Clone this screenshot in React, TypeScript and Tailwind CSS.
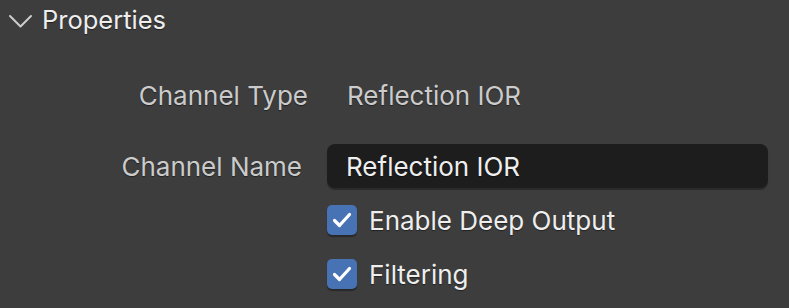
import React from 'react';

const Check: React.FC = () => (
  <div className="w-[30px] h-[30px] rounded-[5px] bg-[#4772b3] flex items-center justify-center shadow-[0_2px_1px_rgba(0,0,0,0.35)]">
    <svg width="22" height="22" viewBox="0 0 22 22" fill="none">
      <path d="M3.5 11.5 L8.5 16.5 L18.5 5.5" stroke="#ffffff" strokeWidth="3.2" strokeLinecap="round" strokeLinejoin="round" />
    </svg>
  </div>
);

export default function App() {
  return (
    <div className="w-[789px] h-[308px] bg-[#3d3d3d] font-['Inter','DejaVu_Sans',sans-serif] text-[26px] [text-shadow:0_1px_1px_rgba(0,0,0,0.45)] overflow-hidden">
      {/* panel header */}
      <div className="h-[40px] flex items-center pl-[8px]">
        <svg width="26" height="16" viewBox="0 0 26 16" fill="none" className="mt-[2px]">
          <path d="M2 3 L12.5 13.5 L23 3" stroke="#cccccc" strokeWidth="2" strokeLinecap="round" strokeLinejoin="round" />
        </svg>
        <span className="ml-[8px] text-[25.5px] text-[#eeeeee]">Properties</span>
      </div>

      {/* channel type */}
      <div className="mt-[34px] h-[42px] flex items-center">
        <div className="w-[308px] text-right text-[#cbcbcb]">Channel Type</div>
        <div className="ml-[39px] text-[#cbcbcb]">Reflection IOR</div>
      </div>

      {/* channel name */}
      <div className="mt-[28px] h-[44px] flex items-center">
        <div className="w-[302px] text-right text-[#cbcbcb]">Channel Name</div>
        <div className="ml-[25px] w-[441px] h-[44px] rounded-[8px] bg-[#1d1d1d] flex items-center pl-[19px] text-[#eeeeee] shadow-[0_2px_1px_rgba(0,0,0,0.3)]">
          Reflection IOR
        </div>
      </div>

      {/* toggles */}
      <div className="mt-[11px] h-[42px] flex items-center pl-[327px] gap-[12px]">
        <Check />
        <span className="text-[#eeeeee]">Enable Deep Output</span>
      </div>
      <div className="mt-[12px] h-[42px] flex items-center pl-[327px] gap-[12px]">
        <Check />
        <span className="text-[#eeeeee]">Filtering</span>
      </div>
    </div>
  );
}
